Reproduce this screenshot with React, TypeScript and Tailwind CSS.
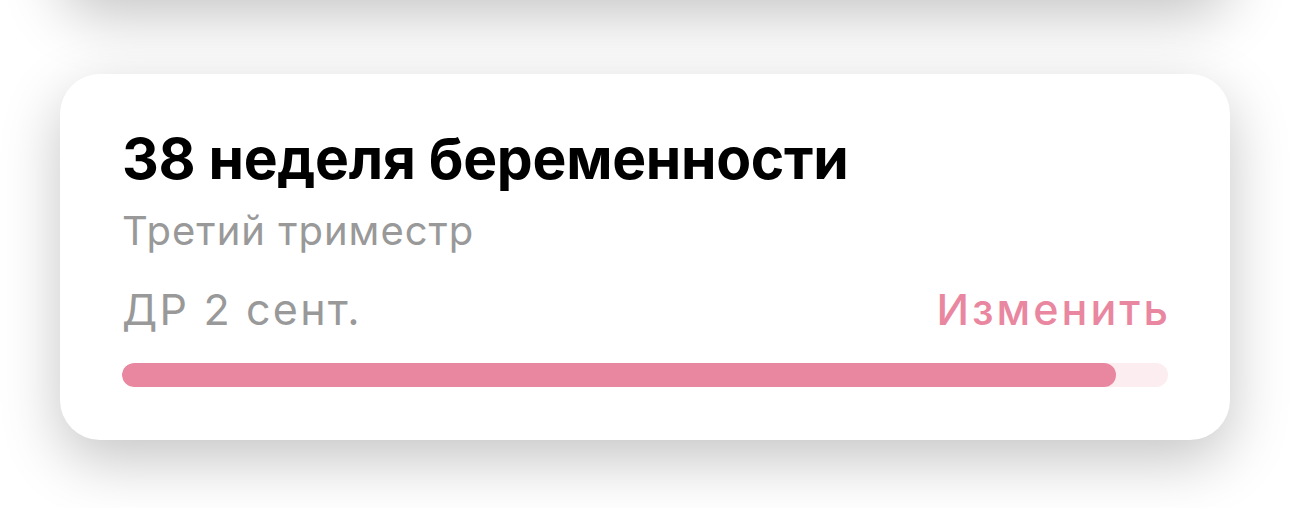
export default function App() {
  const progress = 0.95;

  return (
    <div
      className="min-h-screen bg-white overflow-hidden flex flex-col"
      style={{ fontFamily: 'Inter, "Noto Sans", sans-serif' }}
    >
      {/* card above, mostly out of view */}
      <div className="mx-[60px] -mt-[300px] h-[296px] rounded-[40px] bg-white shadow-[0_20px_60px_rgba(0,0,0,0.23)]" />

      <div className="mx-[60px] mt-[78px] rounded-[40px] bg-white px-[62px] pt-[50px] pb-[53px] shadow-[0_20px_60px_rgba(0,0,0,0.23)]">
        <h2 className="text-[57px] leading-[70px] font-bold text-black tracking-[-0.3px]">
          38 неделя беременности
        </h2>
        <p className="mt-[13px] text-[40px] leading-[48px] text-[#999999] tracking-[1px]">Третий триместр</p>

        <div className="mt-[29px] flex items-center justify-between">
          <span className="text-[43px] leading-[51px] text-[#999999] tracking-[2.2px]">ДР 2 сент.</span>
          <button className="text-[43px] leading-[51px] font-medium text-[#ea87a0] tracking-[3px] -mr-[3px]">
            Изменить
          </button>
        </div>

        <div className="mt-[28px] h-[24px] w-full rounded-full bg-[#fcedf1] overflow-hidden">
          <div className="h-full rounded-full bg-[#ea87a0]" style={{ width: `${progress * 100}%` }} />
        </div>
      </div>
    </div>
  );
}
